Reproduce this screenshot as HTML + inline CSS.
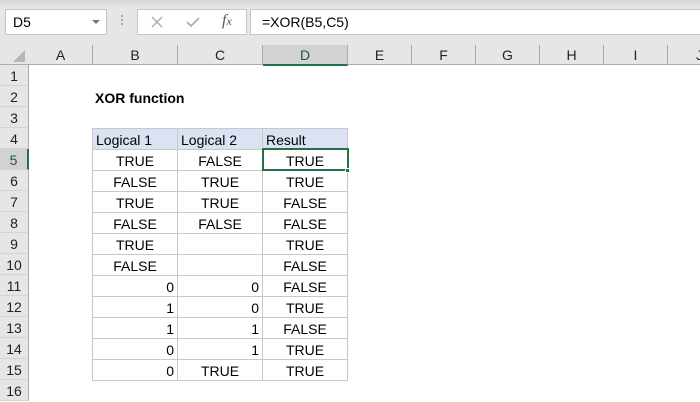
<!DOCTYPE html>
<html><head><meta charset="utf-8"><style>
*{margin:0;padding:0;box-sizing:border-box}
body{width:700px;height:400px;overflow:hidden;background:#fff;font-family:"Liberation Sans",sans-serif;position:relative;color:#000}
.a{position:absolute}
.top{left:0;top:0;width:700px;height:65px;background:#e6e6e6}
.box{background:#fff;border:1px solid #c6c6c6}
.ch{top:45px;height:20px;border-right:1px solid #ababab;font-size:14px;text-align:center;line-height:21px;color:#222}
.rh{left:0;width:29px;height:21px;font-size:14px;text-align:center;line-height:22px;background:#e6e6e6;border-bottom:1px solid #d4d4d4;border-right:1px solid #ababab;color:#222}
.c{height:21px;font-size:14px;line-height:22px;border-right:1px solid #c8c8c8;border-bottom:1px solid #c8c8c8;padding:0 3px;white-space:nowrap}
.ce{text-align:center}.r{text-align:right}
</style></head><body>
<div class="a top"></div>
<div class="a" style="left:0;top:0;width:700px;height:8px;background:linear-gradient(#d6d6d6,#e6e6e6)"></div>
<div class="a box" style="left:5px;top:9px;width:102px;height:26px;font-size:14px;line-height:25px;padding-left:7px">D5</div>
<div class="a" style="left:92px;top:20px;width:0;height:0;border-left:4px solid transparent;border-right:4px solid transparent;border-top:4px solid #777"></div>
<div class="a" style="left:121px;top:15px;width:2px;height:12px;background:repeating-linear-gradient(#aaa 0 2px,transparent 2px 4px)"></div>
<div class="a box" style="left:137px;top:9px;width:110px;height:26px"></div>
<svg class="a" style="left:150px;top:15px" width="14" height="14"><path d="M2 2L12 12M12 2L2 12" stroke="#aaa" stroke-width="1.3" fill="none"/></svg>
<svg class="a" style="left:185px;top:15px" width="16" height="14"><path d="M2 7L6 11L14 3" stroke="#aaa" stroke-width="1.6" fill="none"/></svg>
<div class="a" style="left:222px;top:12px;font-family:'Liberation Serif',serif;font-style:italic;font-size:16px;color:#555">f<span style="font-size:12px">x</span></div>
<div class="a box" style="left:250px;top:9px;width:460px;height:26px;font-size:14px;line-height:25px;padding-left:11px">=XOR(B5,C5)</div>
<svg class="a" style="left:12px;top:49px" width="14" height="14"><path d="M13 1L13 13L1 13Z" fill="#b5b5b5"/></svg>
<div class="a" style="left:0;top:64px;width:700px;height:1px;background:#ababab"></div>
<div class="a ch" style="left:29px;width:64px">A</div>
<div class="a ch" style="left:93px;width:85px">B</div>
<div class="a ch" style="left:178px;width:85px">C</div>
<div class="a ch" style="left:263px;width:85px;background:#d2d2d2;border-bottom:2px solid #217346;height:21px;color:#1a5c38">D</div>
<div class="a ch" style="left:348px;width:64px">E</div>
<div class="a ch" style="left:412px;width:64px">F</div>
<div class="a ch" style="left:476px;width:64px">G</div>
<div class="a ch" style="left:540px;width:64px">H</div>
<div class="a ch" style="left:604px;width:64px">I</div>
<div class="a ch" style="left:668px;width:64px">J</div>
<div class="a rh" style="top:65px">1</div>
<div class="a rh" style="top:86px">2</div>
<div class="a rh" style="top:107px">3</div>
<div class="a rh" style="top:128px">4</div>
<div class="a rh" style="top:149px;background:#d2d2d2;border-right:2px solid #217346;color:#1a5c38">5</div>
<div class="a rh" style="top:170px">6</div>
<div class="a rh" style="top:191px">7</div>
<div class="a rh" style="top:212px">8</div>
<div class="a rh" style="top:233px">9</div>
<div class="a rh" style="top:254px">10</div>
<div class="a rh" style="top:275px">11</div>
<div class="a rh" style="top:296px">12</div>
<div class="a rh" style="top:317px">13</div>
<div class="a rh" style="top:338px">14</div>
<div class="a rh" style="top:359px">15</div>
<div class="a rh" style="top:380px">16</div>
<div class="a" style="left:95px;top:90px;font-size:14px;font-weight:bold">XOR function</div>
<div class="a" style="left:92px;top:128px;width:256px;border-top:1px solid #c8c8c8;border-left:1px solid #c8c8c8">
<div style="display:grid;grid-template-columns:85px 85px 85px">
<div class="c" style="background:#dae2f3">Logical 1</div><div class="c" style="background:#dae2f3">Logical 2</div><div class="c" style="background:#dae2f3">Result</div>
<div class="c ce">TRUE</div><div class="c ce">FALSE</div><div class="c ce">TRUE</div>
<div class="c ce">FALSE</div><div class="c ce">TRUE</div><div class="c ce">TRUE</div>
<div class="c ce">TRUE</div><div class="c ce">TRUE</div><div class="c ce">FALSE</div>
<div class="c ce">FALSE</div><div class="c ce">FALSE</div><div class="c ce">FALSE</div>
<div class="c ce">TRUE</div><div class="c ce"></div><div class="c ce">TRUE</div>
<div class="c ce">FALSE</div><div class="c ce"></div><div class="c ce">FALSE</div>
<div class="c r">0</div><div class="c r">0</div><div class="c ce">FALSE</div>
<div class="c r">1</div><div class="c r">0</div><div class="c ce">TRUE</div>
<div class="c r">1</div><div class="c r">1</div><div class="c ce">FALSE</div>
<div class="c r">0</div><div class="c r">1</div><div class="c ce">TRUE</div>
<div class="c r">0</div><div class="c ce">TRUE</div><div class="c ce">TRUE</div>
</div></div>
<div class="a" style="left:262px;top:148px;width:87px;height:23px;border:2px solid #217346"></div>
<div class="a" style="left:345px;top:168px;width:5px;height:5px;background:#217346;border:1px solid #fff"></div>
</body></html>
